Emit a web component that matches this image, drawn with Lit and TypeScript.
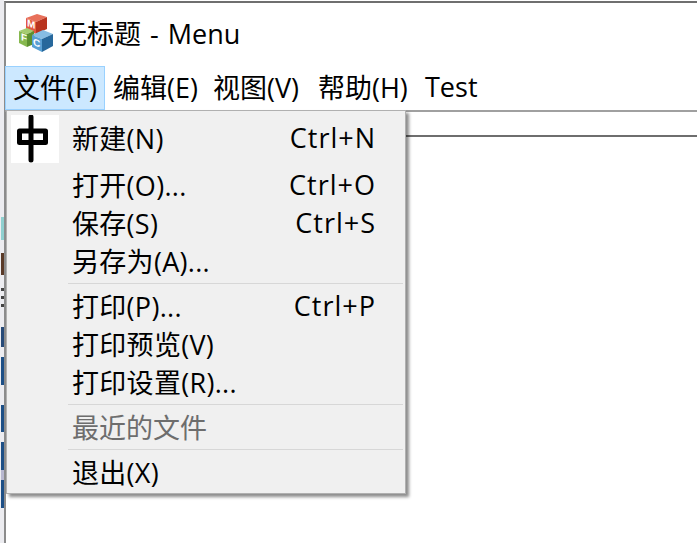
import { LitElement, html, css, svg } from 'lit';
import { customElement } from 'lit/decorators.js';

const menubar = [
  { label: '文件(F)', width: 100 },
  { label: '编辑(E)', width: 100 },
  { label: '视图(V)', width: 105 },
  { label: '帮助(H)', width: 107 },
  { label: 'Test', width: 68 },
];

// null = separator
const menuItems: ({ label: string; key?: string; disabled?: boolean; tall?: boolean } | null)[] = [
  { label: '新建(N)', key: 'Ctrl+N', tall: true },
  { label: '打开(O)...', key: 'Ctrl+O' },
  { label: '保存(S)', key: 'Ctrl+S' },
  { label: '另存为(A)...' },
  null,
  { label: '打印(P)...', key: 'Ctrl+P' },
  { label: '打印预览(V)' },
  { label: '打印设置(R)...' },
  null,
  { label: '最近的文件', disabled: true },
  null,
  { label: '退出(X)' },
];

// bits of the window behind, peeking out left of the frame
const strip = [
  { top: 217, height: 23, color: '#8fd0d0' },
  { top: 253, height: 22, color: '#5a3a28' },
  { top: 288, height: 3, color: '#444' },
  { top: 296, height: 3, color: '#444' },
  { top: 304, height: 3, color: '#444' },
  { top: 327, height: 20, color: '#274a78' },
  { top: 357, height: 28, color: '#1d4f86' },
  { top: 405, height: 27, color: '#1d4f86' },
  { top: 442, height: 28, color: '#1d4f86' },
  { top: 470, height: 10, color: '#b8b8d0' },
  { top: 480, height: 28, color: '#1d4f86' },
];

const mfcIcon = svg`
  <svg class="app-icon" viewBox="0 0 36 38" width="36" height="38">
    <polygon points="7,4 18,0 28,3 17,8" fill="#e8705a"/>
    <polygon points="7,4 17,8 17,20 7,16" fill="#e2593f"/>
    <polygon points="17,8 28,3 28,15 17,20" fill="#b8341f"/>
    <polygon points="0,17 8,14 15,17 8,20" fill="#a4cc70"/>
    <polygon points="0,17 8,20 8,33 0,29" fill="#86b84e"/>
    <polygon points="8,20 15,17 15,30 8,33" fill="#5c9030"/>
    <polygon points="13,21 24,16 34,20 23,25" fill="#86bde4"/>
    <polygon points="13,21 23,25 23,38 13,33" fill="#58a0d4"/>
    <polygon points="23,25 34,20 34,32 23,38" fill="#27689c"/>
    <text class="cube" transform="translate(8,12) skewY(20)">M</text>
    <text class="cube" transform="translate(2,26) skewY(20)">F</text>
    <text class="cube" transform="translate(14,31) skewY(20)">C</text>
  </svg>`;

@customElement('app-root')
export class AppRoot extends LitElement {
  static styles = css`
    :host {
      display: block;
      position: relative;
      width: 697px;
      height: 543px;
      overflow: hidden;
      background: #fff;
      font-family: 'Open Sans', 'Noto Sans CJK SC', sans-serif;
      font-size: 27px;
      color: #000;
    }
    .desktop {
      display: flex;
      height: 100%;
    }
    .edge {
      position: relative;
      width: 4px;
      flex: none;
      background: #ececf0;
    }
    .edge span {
      position: absolute;
      left: 1px;
      width: 3px;
    }
    .window {
      flex: 1;
      margin-top: 1px;
      border-left: 2px solid #8c8c8c;
      border-top: 2px solid #6f6f6f;
      background: #fff;
    }
    .title {
      display: flex;
      align-items: center;
      gap: 5px;
      height: 63px;
      padding: 0 0 4px 13px;
      box-sizing: border-box;
      word-spacing: 2px;
    }
    .app-icon {
      flex: none;
      margin-top: 1px;
    }
    .cube {
      font: bold 10px 'Liberation Sans', sans-serif;
      fill: #fff;
    }
    .menubar {
      display: flex;
      height: 44px;
      margin-left: -1px;
      border-bottom: 2px solid #a0a0a0;
    }
    .top-item {
      display: flex;
      flex: none;
      align-items: center;
      box-sizing: border-box;
      padding: 0 0 4px 8px;
      white-space: nowrap;
    }
    .top-item.open {
      background: #cce8ff;
      border: 1px solid #99d1ff;
      padding: 0 0 3px 7px;
    }
    .toolbar {
      height: 23px;
      border-bottom: 2px solid #6e6e6e;
    }
    .menu {
      position: absolute;
      left: 6px;
      top: 110px;
      width: 400px;
      height: 384px;
      box-sizing: border-box;
      padding: 4px 2px 0 2px;
      background: #f0f0f0;
      border: 1px solid #b0b0b0;
      box-shadow: 3px 3px 3px rgba(0, 0, 0, 0.45);
    }
    .row {
      display: flex;
      align-items: center;
      justify-content: space-between;
      box-sizing: border-box;
      height: 38px;
      padding: 0 27px 4px 63px;
      white-space: nowrap;
      letter-spacing: 0.3px;
    }
    .row.tall {
      height: 48px;
      margin-bottom: 4px;
      position: relative;
    }
    .row.disabled {
      color: #6d6d6d;
      letter-spacing: 0;
    }
    .key {
      letter-spacing: 1px;
    }
    .sep {
      height: 1px;
      margin: 2px 0 4px 59px;
      background: #d7d7d7;
    }
    .glyph-box {
      position: absolute;
      left: 2px;
      top: 0;
      width: 48px;
      height: 48px;
      background: #fff;
    }
  `;

  render() {
    return html`
      <div class="desktop">
        <div class="edge">
          ${strip.map(s => html`<span style="top:${s.top}px;height:${s.height}px;background:${s.color}"></span>`)}
        </div>
        <div class="window">
          <div class="title">${mfcIcon}<span>无标题 - Menu</span></div>
          <div class="menubar">
            ${menubar.map((m, i) => html`<div class="top-item ${i === 0 ? 'open' : ''}" style="width:${m.width}px">${m.label}</div>`)}
          </div>
          <div class="toolbar"></div>
        </div>
      </div>
      <div class="menu">
        ${menuItems.map(item => item === null
          ? html`<div class="sep"></div>`
          : html`<div class="row ${item.tall ? 'tall' : ''} ${item.disabled ? 'disabled' : ''}">
              ${item.tall ? html`<div class="glyph-box">
                <svg viewBox="0 0 48 48" width="48" height="48">
                  <path d="M20 2 V45 M8.5 16 H34.5 V27.5 H8.5 Z" fill="none" stroke="#000" stroke-width="5" stroke-linejoin="round" stroke-linecap="round"/>
                </svg>
              </div>` : ''}
              <span>${item.label}</span><span class="key">${item.key ?? ''}</span>
            </div>`)}
      </div>
    `;
  }
}

declare global {
  interface HTMLElementTagNameMap {
    'app-root': AppRoot;
  }
}
